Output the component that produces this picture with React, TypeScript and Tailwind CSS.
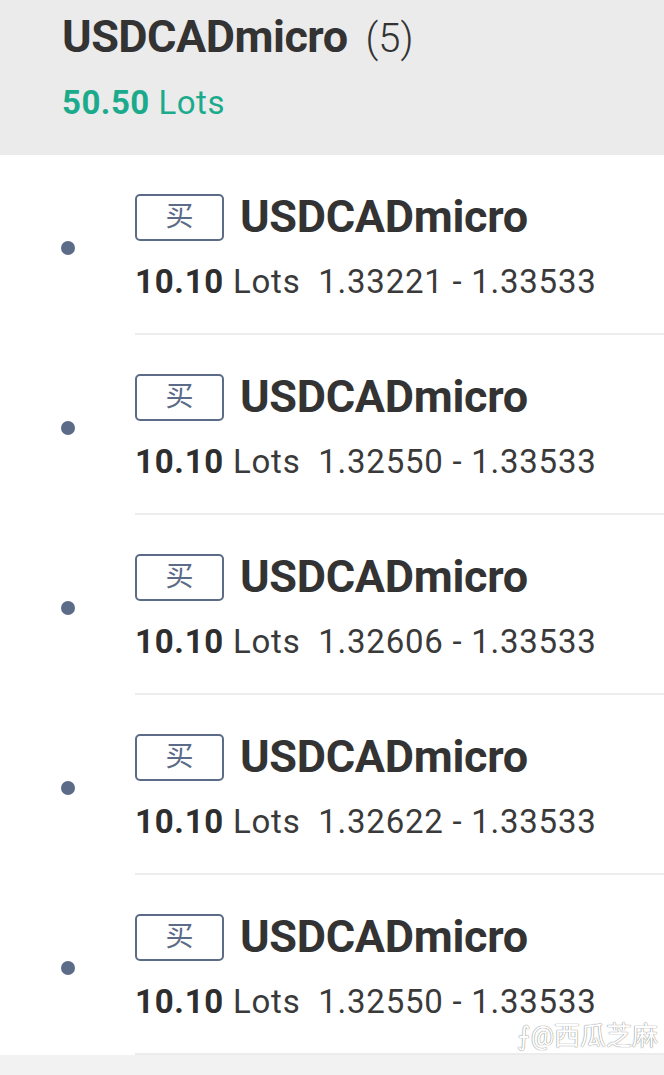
const positions = [
  { lots: '10.10', open: '1.33221', price: '1.33533' },
  { lots: '10.10', open: '1.32550', price: '1.33533' },
  { lots: '10.10', open: '1.32606', price: '1.33533' },
  { lots: '10.10', open: '1.32622', price: '1.33533' },
  { lots: '10.10', open: '1.32550', price: '1.33533' },
];

const font = { fontFamily: 'Roboto, "Noto Sans CJK SC", sans-serif' };

export default function App() {
  return (
    <div className="w-[664px] h-[1075px] bg-[#f2f2f2] overflow-hidden text-[#333]" style={font}>
      <header className="h-[155px] bg-[#ebebeb] pl-[62px] pt-[9px]">
        <div className="flex items-baseline gap-[18px]">
          <h1 className="text-[45px] font-bold leading-[52px] tracking-[-0.5px]">USDCADmicro</h1>
          <span className="text-[40px] font-light">(5)</span>
        </div>
        <p className="mt-[14px] text-[33px] leading-[40px] tracking-[0.5px] text-[#1bab8c]">
          <span className="font-bold">50.50</span> Lots
        </p>
      </header>

      <main className="bg-white">
        {positions.map((item, index) => (
          <article key={index} className="flex h-[180px]">
            <div className="w-[135px] pt-[5px] flex items-center justify-center">
              <span className="w-[14px] h-[14px] rounded-full bg-[#5b6b88]" />
            </div>
            <section className="flex-1 flex flex-col pt-[36px] border-b-2 border-[#ececec]">
              <div className="flex items-center gap-[16px]">
                <span className="w-[89px] h-[47px] flex items-center justify-center border-2 border-[#5b6b88] rounded-[5px] text-[#5b6b88] text-[28px]">
                  买
                </span>
                <h2 className="text-[45px] font-bold leading-[52px] tracking-[-0.3px]">USDCADmicro</h2>
              </div>
              <p className="mt-[19px] text-[33px] leading-[40px] tracking-[0.75px] text-[#3a3a3a] whitespace-nowrap">
                <span className="font-bold text-[#2e2e2e]">{item.lots}</span> Lots&nbsp;&nbsp;{item.open} - {item.price}
              </p>
            </section>
          </article>
        ))}
      </main>

      <div className="relative">
        <span
          className="absolute right-[6px] -top-[38px] text-[26px] text-white"
          style={{ textShadow: '0 0 1px #888, 0 0 1px #888' }}
        >
          ⨍@西瓜芝麻
        </span>
      </div>
    </div>
  );
}
